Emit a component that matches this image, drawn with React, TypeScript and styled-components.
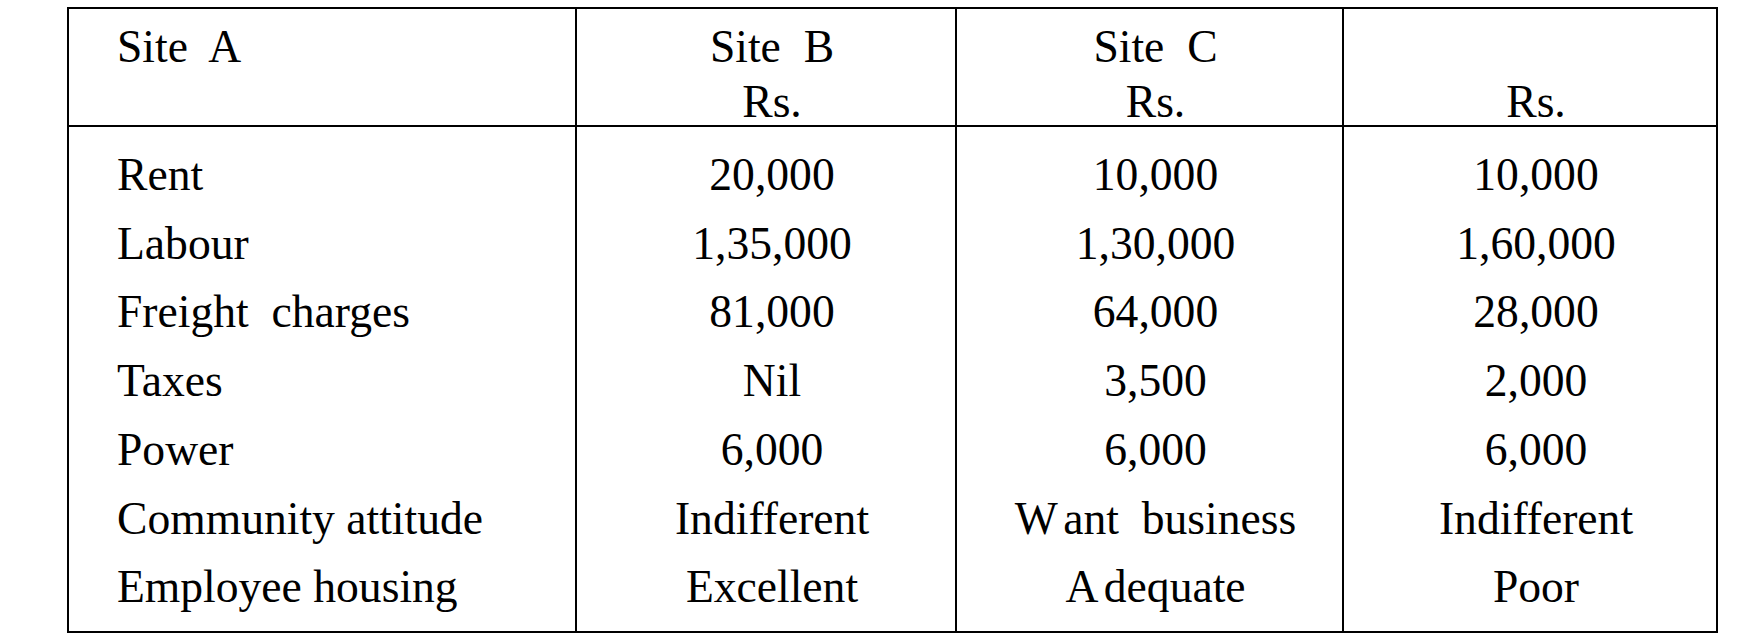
import type { ReactNode } from "react";
import styled, { createGlobalStyle } from "styled-components";

const GlobalStyle = createGlobalStyle`
html, body {
    margin: 0;
    padding: 0;
    background: #ffffff;
}
body {
    font-family: "Liberation Serif", "Times New Roman", serif;
    color: #000000;
}
`

const Page = styled.div`
padding: 7px 0 0 67px;
`

const Table = styled.table`
border-collapse: collapse;
table-layout: fixed;
width: 1651px;
border: 2px solid #000;
font-size: 45.6px;

tbody tr:first-child td {
    padding-top: 14px;
}
tbody tr:last-child td {
    padding-bottom: 9px;
}
`

const Head = styled.th<{ $center?: boolean }>`
font-weight: normal;
vertical-align: top;
padding: 10px 0 0 ${(p) => (p.$center ? "12px" : "48px")};
text-align: ${(p) => (p.$center ? "center" : "left")};
border-left: 2px solid #000;
border-bottom: 2px solid #000;
white-space: nowrap;
`

// two 55px lines, the second one sits close on the rule
const HeadText = styled.div`
height: 106px;
line-height: 55px;
`

const Cell = styled.td<{ $center?: boolean }>`
padding: 0 0 0 ${(p) => (p.$center ? "12px" : "48px")};
line-height: 68.7px;
text-align: ${(p) => (p.$center ? "center" : "left")};
border-left: 2px solid #000;
white-space: nowrap;
`

// the scan leaves a gap after some capitals
const Kern = styled.span`
margin-right: 0.12em;
`

type Row = { label: string; b: ReactNode; c: ReactNode; d: ReactNode };

const rows: Row[] = [
    { label: "Rent", b: "20,000", c: "10,000", d: "10,000" },
    { label: "Labour", b: "1,35,000", c: "1,30,000", d: "1,60,000" },
    { label: "Freight\u00a0 charges", b: "81,000", c: "64,000", d: "28,000" },
    { label: "Taxes", b: "Nil", c: "3,500", d: "2,000" },
    { label: "Power", b: "6,000", c: "6,000", d: "6,000" },
    { label: "Community attitude", b: "Indifferent", c: <><Kern>W</Kern>ant&nbsp; business</>, d: "Indifferent" },
    { label: "Employee housing", b: "Excellent", c: <><Kern>A</Kern>dequate</>, d: "Poor" },
];

function App() {
    return (
        <>
            <GlobalStyle />
            <Page>
                <Table>
                    <colgroup>
                        <col style={{ width: 508 }} />
                        <col style={{ width: 380 }} />
                        <col style={{ width: 387 }} />
                        <col style={{ width: 374 }} />
                    </colgroup>
                    <thead>
                        <tr>
                            <Head><HeadText>Site&nbsp; A</HeadText></Head>
                            <Head $center><HeadText>Site&nbsp; B<br />Rs.</HeadText></Head>
                            <Head $center><HeadText>Site&nbsp; C<br />Rs.</HeadText></Head>
                            <Head $center><HeadText>&nbsp;<br />Rs.</HeadText></Head>
                        </tr>
                    </thead>
                    <tbody>
                        {rows.map((r) => (
                            <tr key={r.label}>
                                <Cell>{r.label}</Cell>
                                <Cell $center>{r.b}</Cell>
                                <Cell $center>{r.c}</Cell>
                                <Cell $center>{r.d}</Cell>
                            </tr>
                        ))}
                    </tbody>
                </Table>
            </Page>
        </>
    )
}

export default App;
